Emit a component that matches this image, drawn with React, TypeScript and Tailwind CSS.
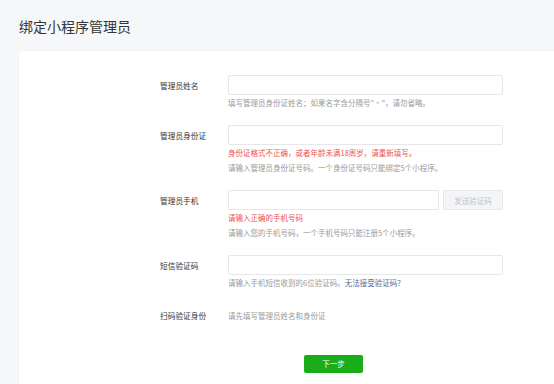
import React from 'react'

const cjk = { fontFamily: '"Noto Sans CJK SC", "Liberation Sans", sans-serif' }

function Row({ label, children }: { label: string; children: React.ReactNode }) {
  return (
    <div className="flex">
      <div className="w-[68px] h-[20px] flex items-center text-[7.7px] text-[#353535] shrink-0">
        {label}
      </div>
      <div className="w-[275px]">{children}</div>
    </div>
  )
}

function Input() {
  return <div className="h-[20px] w-full border border-[#e7e7eb] rounded-[2px] bg-white" />
}

export default function App() {
  return (
    <div className="w-[554px] h-[384px] overflow-hidden bg-[#f6f7f9]" style={cjk}>
      <div className="pl-[19px]">
        <h1 className="pt-[16px] h-[51px] text-[14px] leading-[20px] text-[#353535] font-normal">
          绑定小程序管理员
        </h1>
        <div className="w-[629px] h-[340px] bg-white rounded-t-[2px] shadow-[0_0_2px_rgba(0,0,0,0.06)] pt-[24px] pl-[141px]">
          <div className="flex flex-col gap-[15px] text-[7.5px] leading-[15px]">
            <Row label="管理员姓名">
              <Input />
              <p className="text-[#9a9a9a]">填写管理员身份证姓名；如果名字含分隔号"·"，请勿省略。</p>
            </Row>
            <Row label="管理员身份证">
              <Input />
              <p className="text-[#ec5350]">身份证格式不正确，或者年龄未满18周岁，请重新填写。</p>
              <p className="text-[#9a9a9a]">请输入管理员身份证号码。一个身份证号码只能绑定5个小程序。</p>
            </Row>
            <Row label="管理员手机">
              <div className="flex gap-[4px]">
                <div className="h-[20px] flex-1 border border-[#e7e7eb] rounded-[2px]" />
                <button className="h-[20px] w-[60px] border border-[#e7e7eb] bg-[#f4f5f7] rounded-[2px] text-[7.5px] text-[#c4c4c4]">
                  发送验证码
                </button>
              </div>
              <p className="text-[#ec5350]">请输入正确的手机号码</p>
              <p className="text-[#9a9a9a]">请输入您的手机号码，一个手机号码只能注册5个小程序。</p>
            </Row>
            <Row label="短信验证码">
              <Input />
              <p className="text-[#9a9a9a]">
                请输入手机短信收到的6位验证码。<span className="text-[#576b95]">无法接受验证码?</span>
              </p>
            </Row>
            <Row label="扫码验证身份">
              <div className="h-[20px] flex items-center text-[#9a9a9a]">请先填写管理员姓名和身份证</div>
            </Row>
          </div>
          <div className="mt-[30px] ml-[144px] flex">
            <button className="block w-[59px] h-[18px] bg-[#1aad19] rounded-[2px] text-white text-[7.5px] leading-[18px]">
              下一步
            </button>
          </div>
        </div>
      </div>
    </div>
  )
}
